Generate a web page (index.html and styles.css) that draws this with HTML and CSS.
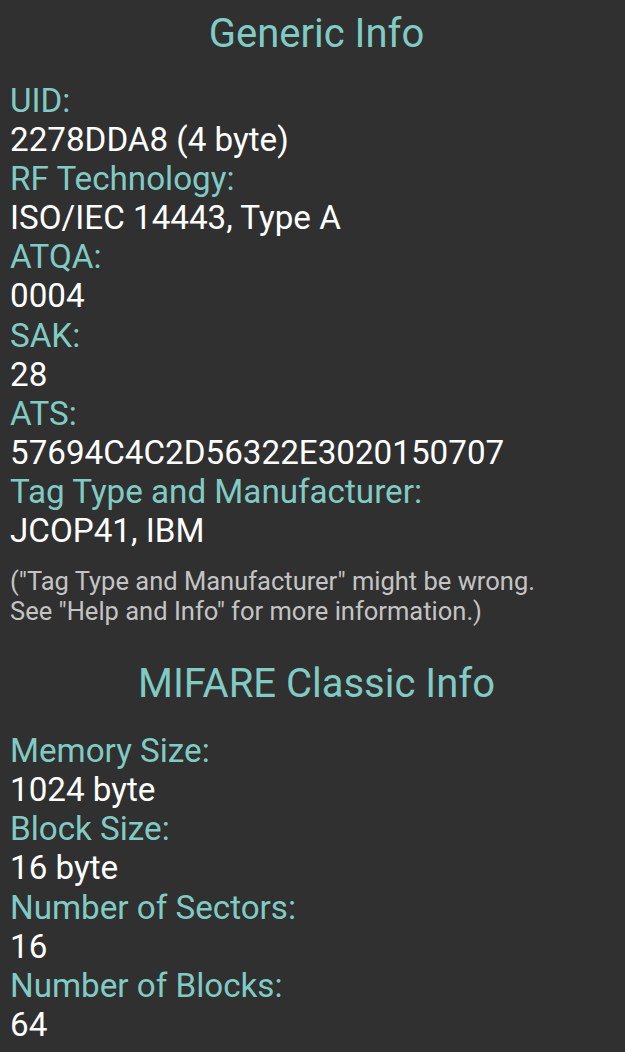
FILE: index.html
```html
<!DOCTYPE html>
<html lang="en">
<head>
  <meta charset="UTF-8">
  <meta name="viewport" content="width=device-width, initial-scale=1.0">
  <title>Tag Info</title>
  <link rel="stylesheet" href="styles.css">
</head>
<body>
  <div class="tag-info">
    <div class="section">
      <div class="section-title">Generic Info</div>
      <div class="field">
        <div class="label">UID:</div>
        <div class="value">2278DDA8 (4 byte)</div>
      </div>
      <div class="field">
        <div class="label">RF Technology:</div>
        <div class="value">ISO/IEC 14443, Type A</div>
      </div>
      <div class="field">
        <div class="label">ATQA:</div>
        <div class="value">0004</div>
      </div>
      <div class="field">
        <div class="label">SAK:</div>
        <div class="value">28</div>
      </div>
      <div class="field">
        <div class="label">ATS:</div>
        <div class="value">57694C4C2D56322E3020150707</div>
      </div>
      <div class="field">
        <div class="label">Tag Type and Manufacturer:</div>
        <div class="value">JCOP41, IBM</div>
      </div>
      <p class="hint">("Tag Type and Manufacturer" might be wrong.<br>See "Help and Info" for more information.)</p>
    </div>

    <div class="section">
      <div class="section-title">MIFARE Classic Info</div>
      <div class="field">
        <div class="label">Memory Size:</div>
        <div class="value">1024 byte</div>
      </div>
      <div class="field">
        <div class="label">Block Size:</div>
        <div class="value">16 byte</div>
      </div>
      <div class="field">
        <div class="label">Number of Sectors:</div>
        <div class="value">16</div>
      </div>
      <div class="field">
        <div class="label">Number of Blocks:</div>
        <div class="value">64</div>
      </div>
    </div>
  </div>
</body>
</html>
```

FILE: styles.css
```css
/* dark tag info screen */
body {
  margin: 0;
  background-color: #303030;
  font-family: Roboto, "Noto Sans", sans-serif;
  color: #ffffff;
}

.tag-info {
  padding: 10px 2px 0 10px;
}

.section-title {
  text-align: center;
  font-size: 40px;
  color: #80cbc4;
  margin-bottom: 24px;
}

.label {
  font-size: 33.2px;
  line-height: 39.1px;
  color: #80cbc4;
}

.value {
  font-size: 33.2px;
  line-height: 39.1px;
  color: #ffffff;
}

.hint {
  margin: 17px 0 34px;
  font-size: 25.5px;
  line-height: 29.5px;
  color: #c4c4c4;
}
```
